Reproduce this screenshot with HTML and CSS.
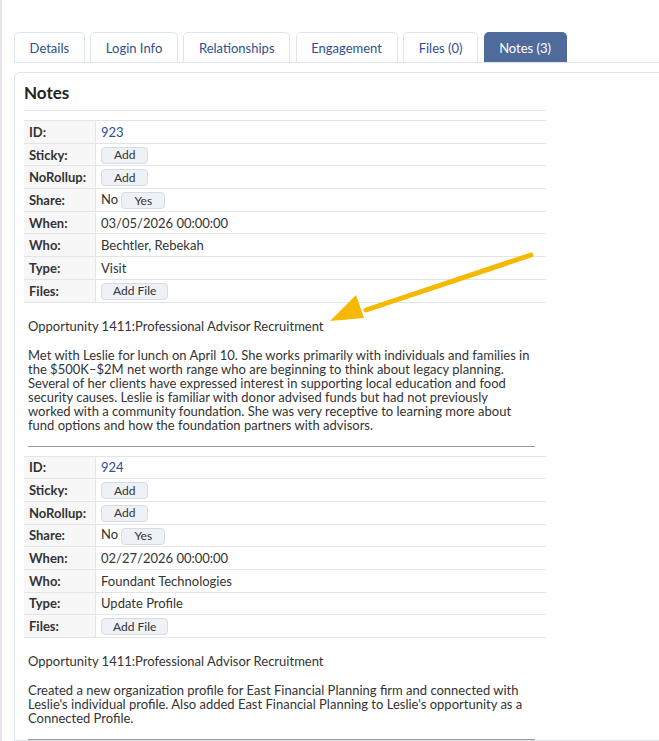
FILE: index.html
```html
<!DOCTYPE html>
<html lang="en">
<head>
  <meta charset="UTF-8">
  <title>Notes</title>
  <link rel="stylesheet" href="styles.css">
</head>
<body>
  <div class="page">
    <ul class="tabs">
      <li class="tab">Details</li>
      <li class="tab">Login Info</li>
      <li class="tab">Relationships</li>
      <li class="tab">Engagement</li>
      <li class="tab">Files (0)</li>
      <li class="tab active">Notes (3)</li>
    </ul>

    <div class="panel">
      <h2 class="panel-title">Notes</h2>

      <div class="note">
        <table class="note-info">
          <tr><th>ID:</th><td><span class="id">923</span></td></tr>
          <tr><th>Sticky:</th><td><button class="btn">Add</button></td></tr>
          <tr><th>NoRollup:</th><td><button class="btn">Add</button></td></tr>
          <tr><th>Share:</th><td>No <button class="btn">Yes</button></td></tr>
          <tr><th>When:</th><td>03/05/2026 00:00:00</td></tr>
          <tr><th>Who:</th><td>Bechtler, Rebekah</td></tr>
          <tr><th>Type:</th><td>Visit</td></tr>
          <tr><th>Files:</th><td><button class="btn btn-file">Add File</button></td></tr>
        </table>
        <p class="note-subject">Opportunity 1411:Professional Advisor Recruitment</p>
        <p class="note-body">Met with Leslie for lunch on April 10. She works primarily with individuals and families in the $500K–$2M net worth range who are beginning to think about legacy planning. Several of her clients have expressed interest in supporting local education and food security causes. Leslie is familiar with donor advised funds but had not previously worked with a community foundation. She was very receptive to learning more about fund options and how the foundation partners with advisors.</p>
        <hr>
        <svg class="arrow" width="220" height="80" viewBox="0 0 220 80">
          <line x1="205" y1="7" x2="40" y2="62" stroke="#f6b800" stroke-width="5" stroke-linecap="round"/>
          <polygon points="4,73 30,47 38,70" fill="#f6b800"/>
        </svg>
      </div>

      <div class="note">
        <table class="note-info">
          <tr><th>ID:</th><td><span class="id">924</span></td></tr>
          <tr><th>Sticky:</th><td><button class="btn">Add</button></td></tr>
          <tr><th>NoRollup:</th><td><button class="btn">Add</button></td></tr>
          <tr><th>Share:</th><td>No <button class="btn">Yes</button></td></tr>
          <tr><th>When:</th><td>02/27/2026 00:00:00</td></tr>
          <tr><th>Who:</th><td>Foundant Technologies</td></tr>
          <tr><th>Type:</th><td>Update Profile</td></tr>
          <tr><th>Files:</th><td><button class="btn btn-file">Add File</button></td></tr>
        </table>
        <p class="note-subject">Opportunity 1411:Professional Advisor Recruitment</p>
        <p class="note-body">Created a new organization profile for East Financial Planning firm and connected with Leslie's individual profile. Also added East Financial Planning to Leslie's opportunity as a Connected Profile.</p>
        <hr>
      </div>
    </div>
  </div>
</body>
</html>
```

FILE: styles.css
```css
body {
  margin: 0;
  font-family: Lato, sans-serif;
  font-size: 13px;
  color: #333;
  background: #fff;
  overflow: hidden;
}
.page {
  border-left: 2px solid #e6e6e6;
  height: 741px;
  box-sizing: border-box;
  padding: 32px 0 0 12px;
}
.tabs {
  list-style: none;
  margin: 0;
  padding: 0;
  display: flex;
  gap: 5.5px;
  border-bottom: 1px solid #dfe5ee;
  height: 30px;
}
.tab {
  border: 1px solid #dfe5ee;
  border-bottom: none;
  border-radius: 5px 5px 0 0;
  padding: 0 14.6px;
  line-height: 30px;
  color: #2f4f8f;
  font-size: 13px;
}
.tab.active {
  background: #4f6b9b;
  border-color: #4f6b9b;
  color: #fff;
}
.panel {
  margin-top: 9px;
  border: 1px solid #dfe5ee;
  border-right: none;
  border-radius: 6px 0 0 0;
  padding: 0 0 0 9px;
  width: 700px;
}
.panel-title {
  margin: 0;
  width: 522px;
  font-size: 17px;
  font-weight: bold;
  color: #222;
  padding: 9px 0 7px 0;
  border-bottom: 1px solid #dfe5ee;
}
.note {
  position: relative;
  width: 522px;
  padding-top: 9px;
}
.note-info {
  width: 100%;
  border-collapse: collapse;
  border-top: 1px solid #e4e4e4;
}
.note-info th,
.note-info td {
  height: 21.7px;
  padding: 0 5px;
  border-bottom: 1px solid #e4e4e4;
  text-align: left;
  vertical-align: middle;
}
.note-info th {
  width: 61px;
  background: #f7f7f7;
  border-right: 1px solid #e4e4e4;
  font-weight: bold;
  color: #333;
}
.note-info .id {
  color: #2a4d9e;
}
.btn {
  font-family: inherit;
  font-size: 12px;
  color: #333;
  background: #eef1f6;
  border: 1px solid #d6dce6;
  border-radius: 4px;
  height: 17px;
  padding: 0 12px;
  line-height: 14px;
  vertical-align: middle;
}
.btn-file {
  padding: 0 11px;
}
.note-subject {
  margin: 16px 0 0 4px;
  line-height: 14px;
}
.note-body {
  margin: 15px 0 0 4px;
  line-height: 14px;
  width: 505px;
}
hr {
  margin: 14px 11px 0 4px;
  border: none;
  border-top: 1px solid #999;
}
.arrow {
  position: absolute;
  left: 302px;
  top: 137px;
}
```
